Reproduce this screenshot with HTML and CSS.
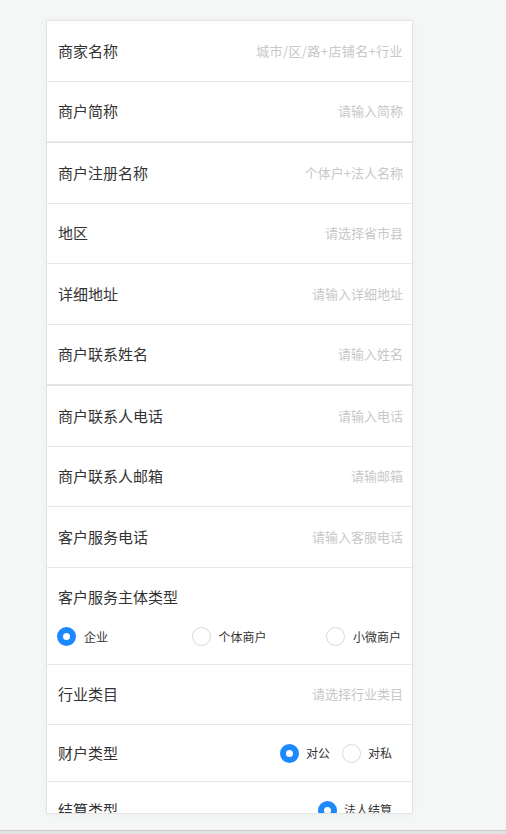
FILE: index.html
```html
<!DOCTYPE html>
<html lang="zh-CN">
<head>
<meta charset="utf-8">
<title>商户信息</title>
<link rel="stylesheet" href="styles.css">
</head>
<body>
<div class="card">
  <div class="group">
    <div class="row"><span class="label">商家名称</span><span class="ph wide">城市/区/路+店铺名+行业</span></div>
    <div class="row"><span class="label">商户简称</span><span class="ph">请输入简称</span></div>
  </div>
  <div class="group">
    <div class="row"><span class="label">商户注册名称</span><span class="ph">个体户+法人名称</span></div>
    <div class="row"><span class="label">地区</span><span class="ph">请选择省市县</span></div>
    <div class="row"><span class="label">详细地址</span><span class="ph">请输入详细地址</span></div>
    <div class="row"><span class="label">商户联系姓名</span><span class="ph">请输入姓名</span></div>
  </div>
  <div class="group">
    <div class="row"><span class="label">商户联系人电话</span><span class="ph">请输入电话</span></div>
    <div class="row"><span class="label">商户联系人邮箱</span><span class="ph">请输邮箱</span></div>
    <div class="row"><span class="label">客户服务电话</span><span class="ph">请输入客服电话</span></div>
    <div class="row stack">
      <span class="label">客户服务主体类型</span>
      <div class="opts3">
        <span class="opt"><i class="radio on"></i><span class="otext">企业</span></span>
        <span class="opt"><i class="radio"></i><span class="otext">个体商户</span></span>
        <span class="opt"><i class="radio"></i><span class="otext">小微商户</span></span>
      </div>
    </div>
    <div class="row"><span class="label">行业类目</span><span class="ph">请选择行业类目</span></div>
    <div class="row short">
      <span class="label">财户类型</span>
      <div class="opts">
        <span class="opt2"><i class="radio on"></i><span class="otext">对公</span></span>
        <span class="opt2"><i class="radio"></i><span class="otext">对私</span></span>
      </div>
    </div>
    <div class="row short">
      <span class="label">结算类型</span>
      <div class="opts">
        <span class="opt2"><i class="radio on"></i><span class="otext">法人结算</span></span>
      </div>
    </div>
  </div>
</div>
<div class="strip"></div>
</body>
</html>
```

FILE: styles.css
```css
html, body {
  margin: 0;
  padding: 0;
}
body {
  background: #f5f7f7;
  font-family: "Noto Sans CJK SC", "Noto Sans", sans-serif;
  color: #333;
}
.card {
  box-sizing: border-box;
  width: 367px;
  height: 794px;
  margin: 20px 0 0 46px;
  background: #fff;
  border: 1px solid #e3e3e3;
  overflow: hidden;
  box-shadow: 0 0 8px rgba(0, 0, 0, 0.04);
}
.group + .group {
  border-top: 1px solid #e2e2e2;
}
.row {
  height: 59.5px;
  display: flex;
  align-items: center;
  justify-content: space-between;
  padding: 0 9px 0 11px;
  border-bottom: 1px solid #e8e8e8;
}
.label {
  font-size: 15px;
  line-height: 20px;
  color: #333;
}
.ph {
  font-size: 13px;
  line-height: 20px;
  color: #c8c8c8;
}
.ph.wide {
  letter-spacing: 0.4px;
}
.row.stack {
  height: auto;
  display: block;
  padding: 19px 10px 17px 10px;
}
.row.stack .label {
  display: block;
  padding-left: 1px;
}
.opts3 {
  display: flex;
  justify-content: space-between;
  margin-top: 20px;
  height: 20px;
}
.opt {
  width: 76px;
  display: flex;
  align-items: center;
}
.radio {
  box-sizing: border-box;
  display: block;
  width: 19px;
  height: 19px;
  border-radius: 50%;
  border: 1px solid #d9d9d9;
  background: #fff;
  flex: none;
}
.radio.on {
  border: 6px solid #1d89ff;
}
.otext {
  font-size: 12px;
  line-height: 20px;
  color: #333;
  margin-left: 8px;
  white-space: nowrap;
}
.row.short {
  height: 56px;
  padding-right: 20px;
}
.opts {
  display: flex;
  align-items: center;
  gap: 12px;
}
.opt2 {
  display: flex;
  align-items: center;
}
.opt2 .otext {
  margin-left: 7px;
}
.strip {
  margin-top: 16px;
  height: 3px;
  background: #e2e2e2;
  border-top: 1px solid #cacaca;
}
```
